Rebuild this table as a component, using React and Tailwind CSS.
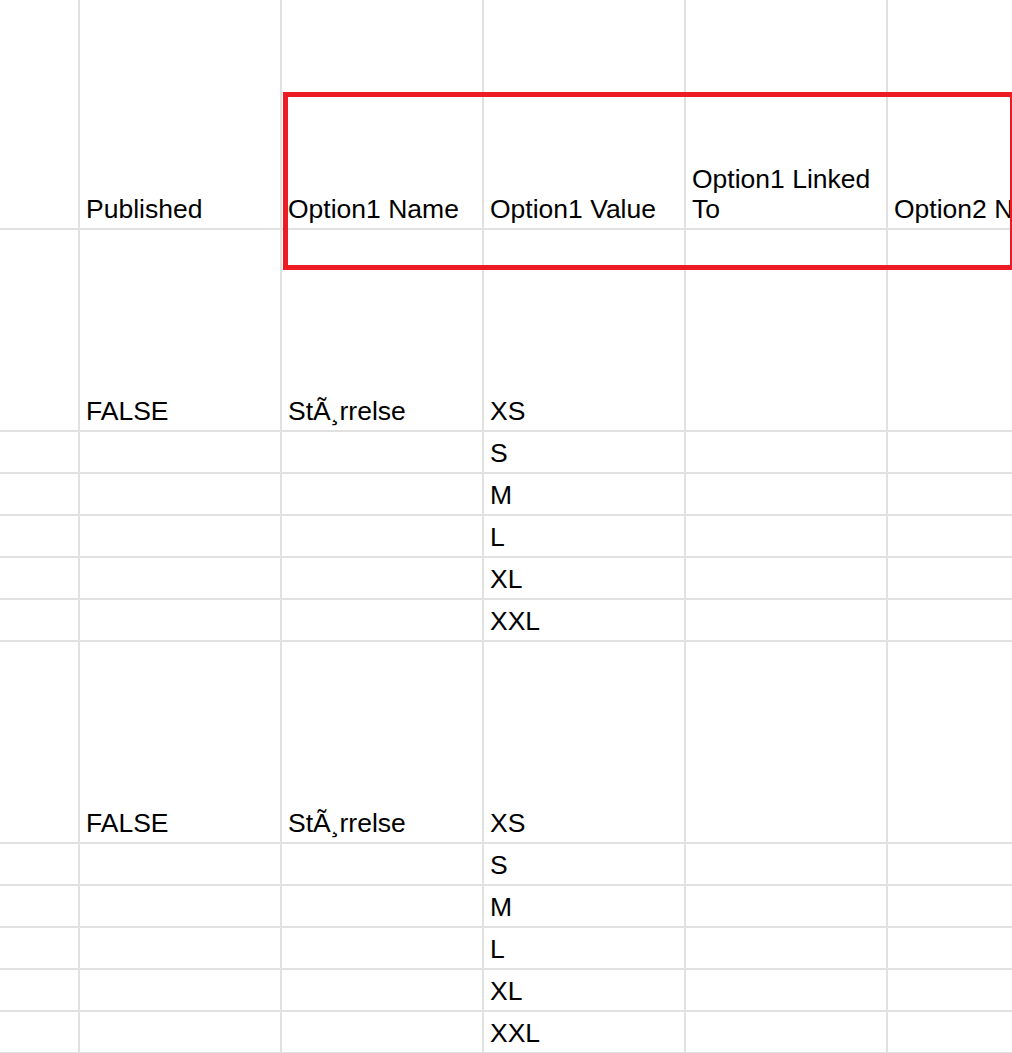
import React from 'react';

const header = ['', 'Published', 'Option1 Name', 'Option1 Value', 'Option1 Linked To', 'Option2 Name'];
const sizes = ['XS', 'S', 'M', 'L', 'XL', 'XXL'];

// one product = a tall first row + five short size rows
const group = sizes.map((size, i) => ({
  tall: i === 0,
  cells: ['', i === 0 ? 'FALSE' : '', i === 0 ? 'St\u00C3\u00B8rrelse' : '', size, '', ''],
}));

const rows = [...group, ...group];

const Cell = ({ first, children }) => (
  <div
    className={
      (first ? 'w-[80px] ' : 'w-[202px] ') +
      'shrink-0 h-full border-r-2 border-[#e1e1e1] flex items-end px-[6px] pb-[4px] leading-[30px] overflow-hidden'
    }
  >
    <span className="block">{children}</span>
  </div>
);

export default function App() {
  return (
    <div
      className="relative w-[1012px] h-[1053px] overflow-hidden bg-white text-black text-[26.5px]"
      style={{ fontFamily: '"Liberation Sans", Arial, sans-serif' }}
    >
      {/* header */}
      <div className="flex h-[230px] border-b-2 border-[#e1e1e1]">
        {header.map((h, i) => (
          <Cell key={i} first={i === 0}>
            <span className={i === 5 ? 'whitespace-nowrap' : ''}>{h}</span>
          </Cell>
        ))}
      </div>

      {rows.map((r, ri) => (
        <div
          key={ri}
          className={(r.tall ? 'h-[202px] ' : 'h-[42px] ') + 'flex border-b-2 border-[#e1e1e1]'}
        >
          {r.cells.map((c, i) => (
            <Cell key={i} first={i === 0}>{c}</Cell>
          ))}
        </div>
      ))}

      {/* red annotation box */}
      <div className="absolute left-[283px] top-[92px] w-[729px] h-[178px] border-[5px] border-r-2 border-[#ed1c24]" />
    </div>
  );
}
